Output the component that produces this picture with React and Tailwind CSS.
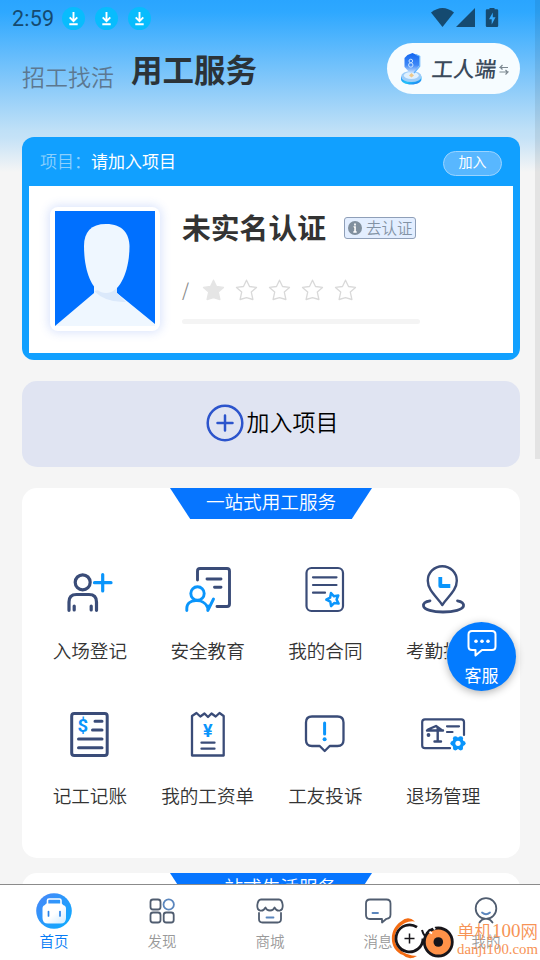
import React from 'react';

const navy = '#3a4c78';
const sky = '#0a95fb';

function Download() {
  return (
    <svg className="size-[23px]" viewBox="0 0 23 23">
      <circle cx="11.5" cy="11.5" r="11.5" fill="#08bcfd" />
      <path d="M11.500 5v9M7.700 10.300l3.800 3.800 3.800-3.800M7.300 17.200h8.400" fill="none" stroke="#fff" strokeWidth="1.900" />
    </svg>
  );
}

function StatusBar() {
  return (
    <div className="flex h-9 shrink-0 items-center pl-3 text-[#154a70]">
      <span className="w-[50px] pt-0.5 font-[Roboto] text-[21.5px] font-normal leading-none tracking-[0.2px]">2:59</span>
      <div className="flex gap-[10px]">
        <Download />
        <Download />
        <Download />
      </div>
      <svg className="ml-auto mr-[41px] h-5 w-[68px]" viewBox="0 0 68 20" fill="currentColor">
        <path d="M0 4.500Q11.500-4.500 23 4.500L11.500 19Z" />
        <path d="M44 0V19H25Z" />
        <path fillRule="evenodd" d="M58.500-.8h5v2h2.500a1.200 1.200 0 0 1 1.200 1.200V17.800a1.200 1.200 0 0 1-1.200 1.200H56A1.200 1.200 0 0 1 54.800 17.800V2.400A1.200 1.200 0 0 1 56 1.200h2.500ZM61.800 4.500 58 11.200h2.700V16.500L64.500 9.300h-2.700Z" />
      </svg>
    </div>
  );
}

function WorkerLogo() {
  return (
    <svg className="h-8 w-[23px] shrink-0" viewBox="0 0 23 32">
      <defs>
        <linearGradient id="badge" x1="0" y1="0" x2="0" y2="1">
          <stop offset="0" stopColor="#1266f0" />
          <stop offset=".6" stopColor="#3f88f7" />
          <stop offset="1" stopColor="#cfe6ff" />
        </linearGradient>
        <linearGradient id="base" x1="0" y1="0" x2="1" y2="1">
          <stop offset="0" stopColor="#1b8af8" />
          <stop offset=".5" stopColor="#24c5fa" />
          <stop offset="1" stopColor="#1767ef" />
        </linearGradient>
      </defs>
      <path d="M1 23.500v2.500c0 3.300 4.600 5.500 10.300 5.500s10.200-2.200 10.200-5.500V23.500Z" fill="url(#base)" />
      <ellipse cx="11.300" cy="23.500" rx="10.200" ry="5.500" fill="#9dcdf9" />
      <ellipse cx="11.300" cy="22.500" rx="7.500" ry="3.500" fill="#dff0fe" />
      <path d="m7.500 2 5-2 6.500 3v10L14 20H10L4.500 14V5Z" fill="url(#badge)" />
      <path d="m16 1.500 3.700 1.800v10L14 20" fill="none" stroke="#5fb0fb" strokeWidth="1.200" />
      <circle cx="10.800" cy="8" r="1.800" fill="none" stroke="#c9e4ff" />
      <circle cx="10.800" cy="12" r="2.200" fill="none" stroke="#c9e4ff" />
      <path d="m9 22.500 2.500-2.500 2.500 2.500-2.500 2Z" fill="#ecc88c" />
    </svg>
  );
}

function Header() {
  return (
    <header className="flex h-[101px] shrink-0 items-start pl-[22px] pr-5">
      <span className="mt-6 text-[23px] leading-8 text-[#5c7891]">招工找活</span>
      <h1 className="ml-[17px] mt-3 text-[31.500px] font-bold leading-10 text-[#2b3338]">用工服务</h1>
      <div className="ml-auto mt-[7px] flex h-[51px] w-[133px] items-center rounded-full bg-[#f6fcff] pl-[13px]">
        <WorkerLogo />
        <span className="-mt-0.5 ml-[9px] -skew-x-[6deg] text-[21.500px] font-medium leading-none text-[#3b4a5b]">工人端</span>
        <svg className="ml-[2px] mt-0.5 h-[11px] w-[10px] shrink-0" viewBox="0 0 10 11" fill="none" stroke="#7b8790" strokeWidth="1.200">
          <path d="M3.500 1 1 3.500h8M1.500 3.500l2 2M.500 8h8.500L6.500 10.500M8.500 8l-2-2" />
        </svg>
      </div>
    </header>
  );
}

function Star({ filled }) {
  return (
    <svg className="size-[23px]" viewBox="0 0 23 23">
      <path
        d="m11.500 1.200 3 6.300 7 .9-5.200 4.700 1.600 7.400-6.400-1.800-6.400 1.800 1.600-7.400-5.200-4.700 7-.9Z"
        fill={filled ? '#e5e5e5' : 'none'}
        stroke={filled ? '#e5e5e5' : '#d9d9d9'}
        strokeWidth="1.300"
        strokeLinejoin="round"
      />
    </svg>
  );
}

function Portrait() {
  return (
    <div className="h-[124px] w-[110px] rounded-lg bg-white p-[5px] pt-1 shadow-[0_0_10px_2px_rgba(60,110,240,0.18)]">
      <svg className="h-[115px] w-[100px]" viewBox="0 0 100 115">
        <path d="M0 0h100v115H0Z" fill="#0070ff" />
        <path d="M0 115 39 82V70h23v12l38 31v2Z" fill="#eff7ff" />
        <path d="M39 80q12 12 32 11L62 82v-6Z" fill="#dbe9fb" />
        <path d="M51 13c17 0 23 10 23.500 22 0 24-9 47-23.500 47S29 59 29 35c0-14 7-22 22-22Z" fill="#eff7ff" />
      </svg>
    </div>
  );
}

function ProfileCard() {
  return (
    <section className="ml-[22px] flex h-[223px] w-[498px] shrink-0 flex-col rounded-xl bg-[#11a0ff] px-[7px] pb-[7px]">
      <div className="flex h-[49px] items-center pl-[11px] pr-[11px] text-[17px] text-white">
        <span className="-mt-0.5 text-[#8dd0fd]">项目：</span>
        <span className="-mt-0.5 font-normal">请加入项目</span>
        <button className="ml-auto mt-[3px] h-[25px] w-[59px] rounded-full border border-[#9bd4ff] bg-[#58b7ff] pb-[5px] text-[14px] font-normal leading-[18px]">加入</button>
      </div>
      <div className="flex flex-1 bg-white pl-[21px] pt-[21px]">
        <Portrait />
        <div className="ml-[22px] flex flex-col">
          <div className="flex h-[42px] items-center">
            <h2 className="-mt-0.5 text-[28.800px] font-bold leading-10 text-[#333]">未实名认证</h2>
            <div className="ml-[18px] flex h-[22px] w-[72px] items-center rounded-[3px] border border-[#8f9fb8] bg-[#e3eeff] pl-[3px] text-[15.500px] leading-none text-[#8393a5]">
              <svg className="mr-1 size-[14px] shrink-0" viewBox="0 0 14 14">
                <circle cx="7" cy="7" r="7" fill="#808f9e" />
                <path d="M7 2.500v2M5.500 6H7v5M5.300 11h3.400" stroke="#fff" strokeWidth="1.700" />
              </svg>
              <span className="whitespace-nowrap">去认证</span>
            </div>
          </div>
          <div className="mt-[29px] flex h-6 items-center gap-[10px]">
            <span className="-mt-0.5 w-[10px] text-[18px] leading-none text-[#888]">/</span>
            <Star filled />
            <Star />
            <Star />
            <Star />
            <Star />
          </div>
          <div className="mt-[17px] h-[5px] w-[238px] rounded-full bg-[#f4f4f4]" />
        </div>
      </div>
    </section>
  );
}

function JoinProject() {
  return (
    <button className="ml-[22px] mt-[21px] flex h-[86px] w-[498px] shrink-0 items-center justify-center rounded-[15px] bg-[#e0e4f2] pb-0.5 pl-[2px] text-[23px] text-black">
      <svg className="mr-[3px] size-[38px]" viewBox="0 0 38 38" fill="none" stroke="#2c54cc" strokeWidth="2.500" strokeLinecap="round">
        <circle cx="19" cy="19" r="17.300" />
        <path d="M11.500 19h15M19 11.500v15" />
      </svg>
      <span className="-mt-1">加入项目</span>
    </button>
  );
}

function SectionTitle({ children }) {
  return (
    <h3 className="mx-auto h-[31px] w-[202px] bg-[#0675ff] text-center text-[18.600px] leading-[26px] text-white [clip-path:polygon(0_0,100%_0,90%_100%,10%_100%)]">
      {children}
    </h3>
  );
}

const icons = {
  checkin: (
    <g strokeWidth="3.200">
      <circle cx="16.700" cy="16.300" r="7.500" />
      <path d="M3 44.300V36q0-7.500 7.500-7.500h12.500q7.500 0 7.500 7.500v8.300M8.200 40v4M25.200 40v4" />
      <path d="M36.700 8.500v16.500M28.500 16.700h16.500" stroke={sky} />
    </g>
  ),
  training: (
    <g strokeWidth="2.900">
      <path d="M13.500 14V5q0-2.500 2.500-2.500h27q2.500 0 2.500 2.500v33q0 2.500-2.500 2.500H33M23 13h14M30.500 21.300H37" />
      <g stroke={sky}>
        <circle cx="13.500" cy="27.500" r="6.700" />
        <path d="M2.800 44.500v-2.300c0-9.500 17-10.500 20.500-1.200M23.800 40v4.500L29.500 33" />
      </g>
    </g>
  ),
  contract: (
    <g strokeWidth="2.200">
      <rect x="5.500" y="2" width="36.500" height="43" rx="5" />
      <path d="M12 11.300h23.500M12 19h23.500M12 26.700h12" />
      <path d="m30 27 3 3.300 4.300-.7-1.700 4 2 4-4.500-.5-3 3-.8-4.400-4-2 3.800-2Z" stroke={sky} strokeWidth="2.500" />
    </g>
  ),
  attendance: (
    <g strokeWidth="2.400">
      <path d="M23.300 39C18 31 8.800 24.500 8.800 14.700a14.500 14.500 0 0 1 29 0C37.800 24.500 28.600 31 23.300 39Z" />
      <path d="M11 34.800C6 35.500 4 37.500 4.500 40c.7 3.800 9.500 6 19.500 6 11 0 19.800-2.500 20.500-6 .5-2.500-1.700-4.500-6-5.200" strokeWidth="2.800" />
      <path d="M21.300 11v9h10" stroke={sky} strokeWidth="3.800" strokeLinecap="butt" />
    </g>
  ),
  ledger: (
    <g strokeWidth="3">
      <rect x="5.700" y="2.500" width="35.500" height="42" rx="2.500" />
      <path d="M29 10.300h7M26.500 19H36M12.500 28H36M12.500 36.700H36" />
      <text x="16.800" y="21" fill={sky} stroke="none" fontSize="18.500" fontWeight="700" fontFamily="Roboto, sans-serif" textAnchor="middle">$</text>
    </g>
  ),
  payslip: (
    <g strokeWidth="2.300">
      <path d="M8 44.500V5L12.500 2l3.800 3.500L20.500 2.500 24 6l3.500-3.500 4.200 3L35.500 2 39.700 5v39.500Z" />
      <path d="M17.500 31.700h13M17.500 37.700h13" />
      <text x="23.900" y="25.500" fill={sky} stroke="none" fontSize="18" fontWeight="700" fontFamily="Roboto, sans-serif" textAnchor="middle">¥</text>
    </g>
  ),
  complaint: (
    <g strokeWidth="2.300">
      <path d="M11 5.500h25.500q6 0 6 6v17.500q0 6-6 6H28.700l-5 5-5-5H11q-6 0-6-6V11.500q0-6 6-6Z" />
      <path d="M23.600 12v11" stroke={sky} strokeWidth="3" />
      <circle cx="23.600" cy="28.300" r="2" fill={sky} stroke="none" />
    </g>
  ),
  exit: (
    <g strokeWidth="2.200">
      <path d="M45 24V11q0-2.700-2.700-2.700H6Q3.200 8.300 3.200 11v23.500q0 2.700 2.800 2.700H31M28 15.300h12M28 21h5.500" />
      <path d="M8 19.500h16M9 18.500l8-3.500 5.500 4M18.700 17v13M15.500 30.500h6.500" strokeWidth="2.400" />
      <circle cx="9.500" cy="24" r="1.900" fill={navy} stroke="none" />
      <g fill={sky} stroke="none">
        <circle cx="39" cy="32.300" r="6" />
        <circle cx="44.200" cy="32.300" r="2.400" />
        <circle cx="33.800" cy="32.300" r="2.400" />
        <circle cx="36.300" cy="27.600" r="2.400" />
        <circle cx="41.700" cy="27.600" r="2.400" />
        <circle cx="36.300" cy="37" r="2.400" />
        <circle cx="41.700" cy="37" r="2.400" />
      </g>
      <circle cx="39" cy="32.300" r="2.600" fill="#fff" stroke="none" />
    </g>
  ),
};

const services = [
  ['checkin', '入场登记'],
  ['training', '安全教育'],
  ['contract', '我的合同'],
  ['attendance', '考勤打卡'],
  ['ledger', '记工记账'],
  ['payslip', '我的工资单'],
  ['complaint', '工友投诉'],
  ['exit', '退场管理'],
];

function Services() {
  return (
    <section className="ml-[22px] mt-[21px] h-[370px] w-[498px] shrink-0 rounded-[15px] bg-white">
      <SectionTitle>一站式用工服务</SectionTitle>
      <div className="ml-[9px] mt-[47px] grid w-[471px] grid-cols-4">
        {services.map(([icon, label]) => (
          <div key={icon} className="flex h-[145px] flex-col items-center">
            <svg className="size-12 overflow-visible" viewBox="0 0 48 48" fill="none" stroke={navy} strokeLinecap="round" strokeLinejoin="round">
              {icons[icon]}
            </svg>
            <span className="mt-[22px] whitespace-nowrap text-[18.600px] leading-7 text-[#333]">{label}</span>
          </div>
        ))}
      </div>
    </section>
  );
}

const tabs = [
  {
    label: '首页',
    active: true,
    art: (
      <>
        <defs>
          <linearGradient id="home" x1="0" y1="0" x2="1" y2="1">
            <stop offset="0" stopColor="#4a86f8" />
            <stop offset="1" stopColor="#08adff" />
          </linearGradient>
          <linearGradient id="bag" x1="0" y1="0" x2="1" y2="1">
            <stop offset=".5" stopColor="#fff" />
            <stop offset="1" stopColor="#cdeaff" />
          </linearGradient>
        </defs>
        <circle cx="18" cy="18" r="17.800" fill="url(#home)" stroke="none" />
        <path d="M11.500 11V7.500q0-1.500 1.500-1.500h10.500Q25 6 25 7.500V11" stroke="#fff" strokeWidth="1.600" />
        <path d="M10.500 10.500h15q1 0 1.500 1.500 3 .5 3 3.500V25q0 5.500-5.500 5.500H12q-5.500 0-5.500-5.500V15.500q0-3 2.500-3.500 .5-1.500 1.500-1.500Z" fill="url(#bag)" stroke="none" />
        <path d="M12.500 18.500v4.500M24 18.500v4.500" stroke="#2a83e8" strokeWidth="1.700" />
      </>
    ),
  },
  {
    label: '发现',
    art: (
      <>
        <rect x="6.500" y="6.500" width="10" height="10" rx="2.500" />
        <circle cx="24.700" cy="11.500" r="5.200" stroke="#5b86bd" />
        <rect x="6.500" y="19.500" width="10" height="10" rx="2.500" />
        <rect x="19.700" y="19.500" width="10" height="10" rx="2.500" />
      </>
    ),
  },
  {
    label: '商城',
    art: (
      <>
        <path d="M9 6.500h18q3 0 3.700 5.500c.5 6.500-5.500 7.500-8.200 2.500q-1 3-4.500 3t-4.500-3C10.800 19.500 4.800 18.500 5.300 12Q6 6.500 9 6.500ZM7 20v6q0 3.500 3.500 3.500h15Q29 29.500 29 26v-6" />
        <path d="M14.500 24.500h7" stroke="#5b86bd" />
      </>
    ),
  },
  {
    label: '消息',
    art: (
      <>
        <path d="M10 6.500h16.500Q30.500 6.500 30.500 10.500v11q0 4-4 4.300L22 29.500V26H10q-4 0-4-4V10.500q0-4 4-4Z" />
        <path d="M12.500 20h5.500" stroke="#5b86bd" />
      </>
    ),
  },
  {
    label: '我的',
    art: (
      <>
        <circle cx="18" cy="15.500" r="10.300" />
        <path d="M11.500 29.500q2-3.500 5-3.700M24.500 29.500q-2-3.500-5-3.700" />
        <path d="M14 19.500q4 3.500 8 0" stroke="#5b86bd" />
      </>
    ),
  },
];

function TabBar() {
  return (
    <nav className="grid h-[76px] shrink-0 grid-cols-5 border-t border-[#8b8b8b] bg-white">
      {tabs.map((tab) => (
        <div key={tab.label} className="flex flex-col items-center pt-2">
          <svg className="size-9" viewBox="0 0 36 36" fill="none" stroke="#505d70" strokeWidth="1.800" strokeLinecap="round" strokeLinejoin="round">
            {tab.art}
          </svg>
          <span className={`text-[14.500px] leading-6 ${tab.active ? 'text-[#067cf6]' : 'text-[#999]'}`}>{tab.label}</span>
        </div>
      ))}
    </nav>
  );
}

function SupportButton() {
  return (
    <button className="absolute left-[447px] top-[622px] flex size-[69px] flex-col items-center rounded-full bg-[#037bff] pt-[7px] text-white shadow-[0_2px_8px_rgba(0,0,0,0.3),0_0_0_1px_rgba(255,255,255,0.8)]">
      <svg className="h-[29px] w-[30px]" viewBox="0 0 30 29" fill="none" stroke="#fff" strokeWidth="2" strokeLinejoin="round">
        <path d="M5 2h20q3.500 0 3.500 3.500v12Q28.500 21 25 21H15l-6.500 5.500V21H5q-3.500 0-3.500-3.500v-12Q1.500 2 5 2Z" />
        <g fill="#fff" stroke="none">
          <circle cx="9" cy="12.300" r="1.800" />
          <circle cx="15" cy="12.300" r="1.800" />
          <circle cx="21" cy="12.300" r="1.800" />
        </g>
      </svg>
      <span className="mt-[5px] text-[17px] font-normal leading-6">客服</span>
    </button>
  );
}

function Watermark() {
  return (
    <div className="absolute left-[390px] top-[917px] flex">
      <svg className="h-[43px] w-[67px]" viewBox="0 0 67 43" fill="none">
        <path d="M25 4.500Q18-2 11 4.500C-2 13-1 33 13 38q6 6 14 1-5 0-10-2C1 31 1 13 15 6q5-2.500 10-1.500Z" fill="#f36b12" />
        <circle cx="19.500" cy="21.500" r="14.500" fill="#fff" />
        <path d="M27 10.200A13.500 13.500 0 1 0 33 21.500" stroke="#17151a" strokeWidth="2.800" />
        <path d="M19.500 16.500v10M14.500 21.500h10" stroke="#17151a" strokeWidth="1.500" />
        <circle cx="48.300" cy="25" r="14" fill="#ff9248" stroke="#17151a" strokeWidth="2.800" />
        <circle cx="48.300" cy="25" r="4.800" fill="#17151a" />
        <path d="M38 13.500l4 3M43 9.500l2 3" stroke="#fff" strokeWidth="2" />
        <path d="M32 13q1 4 3 6M36.500 16.500l3.500-4" stroke="#17151a" strokeWidth="2" />
      </svg>
      <div className="flex flex-col whitespace-nowrap pt-[3px] text-[#f79355]">
        <span className="flex h-[21px] items-center text-[17.500px] leading-none">
          单机<span className="font-['Liberation_Serif'] text-[19px]">100</span>网
        </span>
        <span className="h-[16px] font-['Liberation_Serif'] text-[14.800px] leading-[16px]">danji100.com</span>
      </div>
    </div>
  );
}

export default function App() {
  return (
    <div className="relative flex h-[960px] w-[540px] flex-col overflow-hidden bg-[#f5f5f5] font-['Noto_Sans_CJK_SC',sans-serif] font-[350]">
      <main className="flex h-[884px] flex-col overflow-hidden bg-[linear-gradient(180deg,#2aa5ff_0px,#2ea8ff_12px,#64bcfc_55px,#91cdf9_92px,#bfe0f7_130px,#c5e2f7_138px,#f5f5f5_172px)]">
        <StatusBar />
        <Header />
        <ProfileCard />
        <JoinProject />
        <Services />
        <section className="ml-[22px] mt-[15px] h-[370px] w-[498px] shrink-0 rounded-[15px] bg-white">
          <SectionTitle>一站式生活服务</SectionTitle>
        </section>
      </main>
      <TabBar />
      <div className="absolute right-0 top-0 h-[459px] w-[5px] bg-black/[0.07]" />
      <SupportButton />
      <Watermark />
    </div>
  );
}
